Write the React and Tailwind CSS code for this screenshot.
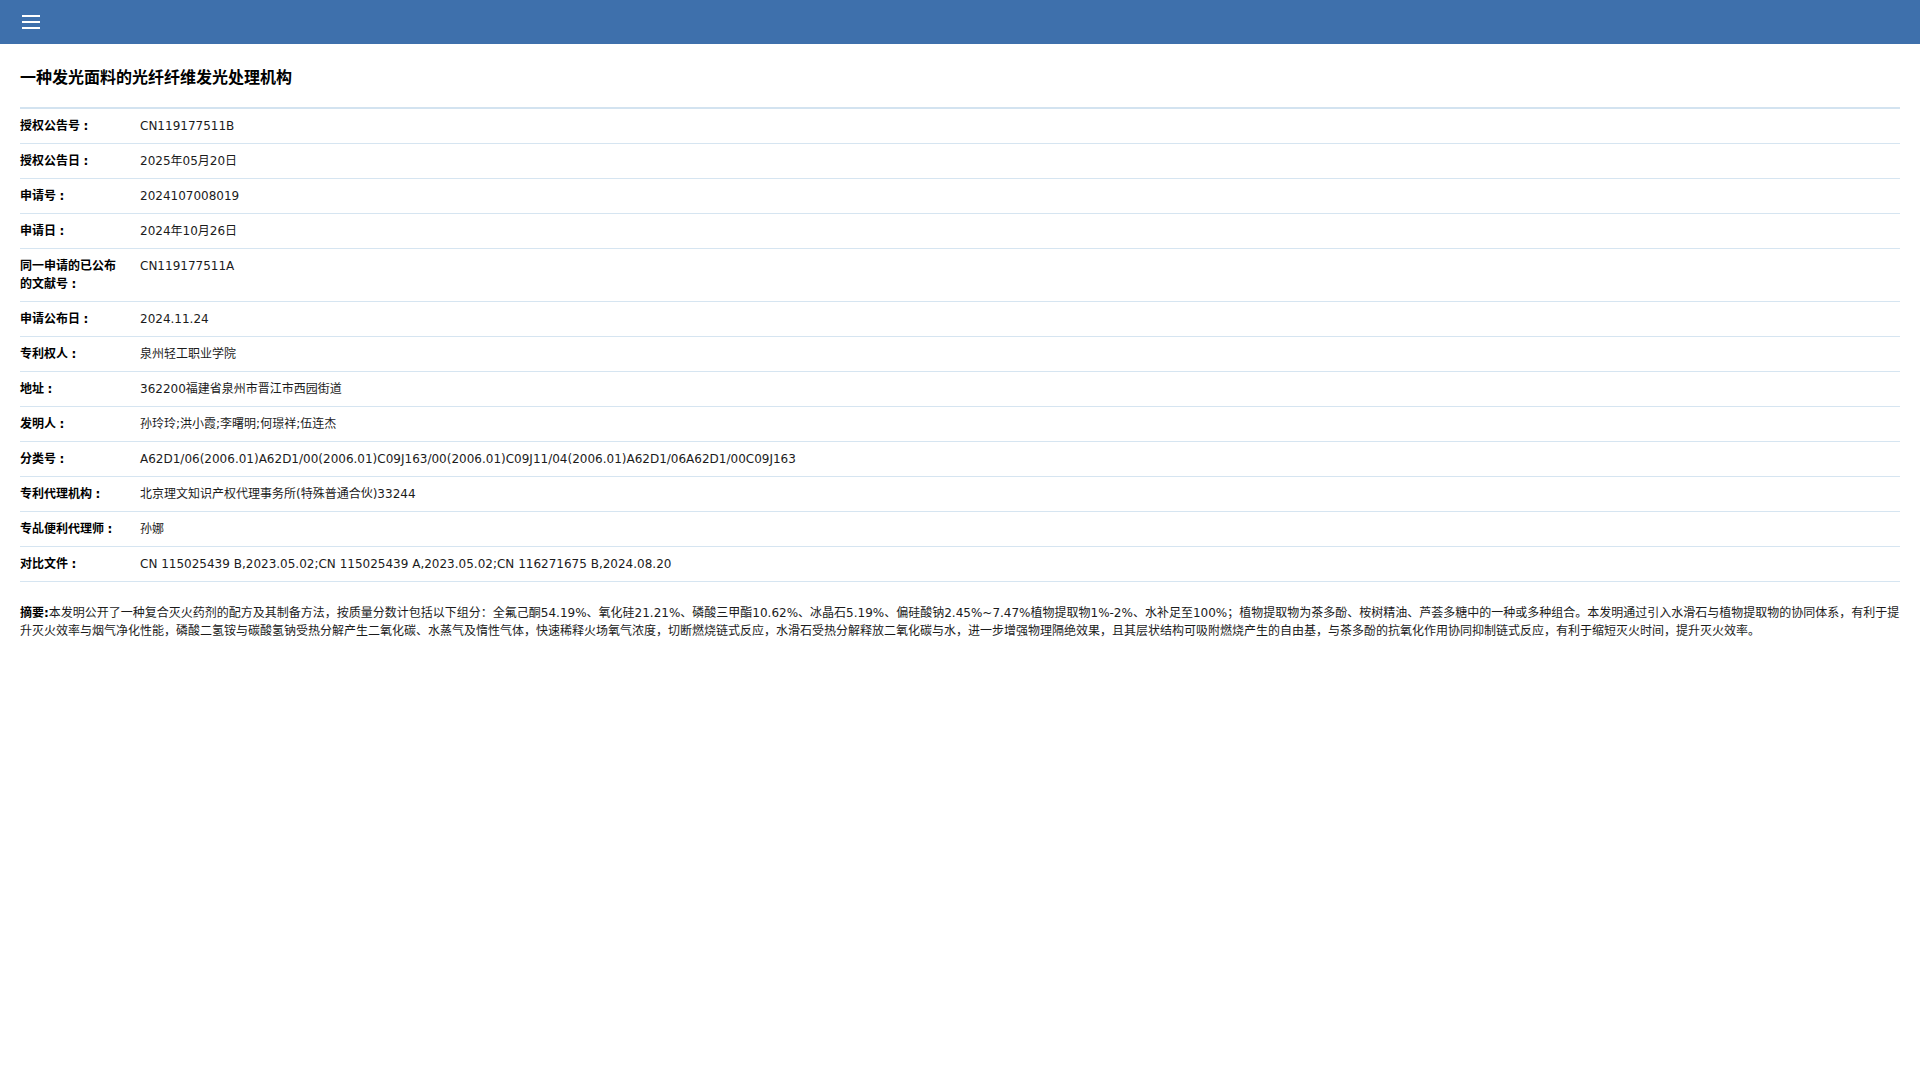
import React from 'react'

const rows = [
    ['授权公告号', 'CN119177511B'],
    ['授权公告日', '2025年05月20日'],
    ['申请号', '2024107008019'],
    ['申请日', '2024年10月26日'],
    ['同一申请的已公布的文献号', 'CN119177511A'],
    ['申请公布日', '2024.11.24'],
    ['专利权人', '泉州轻工职业学院'],
    ['地址', '362200福建省泉州市晋江市西园街道'],
    ['发明人', '孙玲玲;洪小霞;李曙明;何璟祥;伍连杰'],
    ['分类号', 'A62D1/06(2006.01)A62D1/00(2006.01)C09J163/00(2006.01)C09J11/04(2006.01)A62D1/06A62D1/00C09J163'],
    ['专利代理机构', '北京理文知识产权代理事务所(特殊普通合伙)33244'],
    ['专乩便利代理师', '孙娜'],
    ['对比文件', 'CN 115025439 B,2023.05.02;CN 115025439 A,2023.05.02;CN 116271675 B,2024.08.20'],
]

const abstract = '本发明公开了一种复合灭火药剂的配方及其制备方法，按质量分数计包括以下组分：全氟己酮54.19%、氧化硅21.21%、磷酸三甲酯10.62%、冰晶石5.19%、偏硅酸钠2.45%~7.47%植物提取物1%-2%、水补足至100%；植物提取物为茶多酚、桉树精油、芦荟多糖中的一种或多种组合。本发明通过引入水滑石与植物提取物的协同体系，有利于提升灭火效率与烟气净化性能，磷酸二氢铵与碳酸氢钠受热分解产生二氧化碳、水蒸气及惰性气体，快速稀释火场氧气浓度，切断燃烧链式反应，水滑石受热分解释放二氧化碳与水，进一步增强物理隔绝效果，且其层状结构可吸附燃烧产生的自由基，与茶多酚的抗氧化作用协同抑制链式反应，有利于缩短灭火时间，提升灭火效率。'

const App = () => {
    return (
        <div className="min-h-screen bg-white text-[#1b1b1b] font-['DejaVu_Sans','Noto_Sans_CJK_SC',sans-serif]">
            {/* top bar */}
            <div className="h-[44px] bg-[#3e70ac] flex items-center pl-[22px]">
                <button className="flex flex-col gap-[4px] w-[18px]">
                    <span className="block h-[2px] w-[18px] bg-white"></span>
                    <span className="block h-[2px] w-[18px] bg-white"></span>
                    <span className="block h-[2px] w-[18px] bg-white"></span>
                </button>
            </div>

            <div className="px-[20px]">
                <h1 className="mt-[22px] mb-[17px] text-[16px] leading-[24px] font-bold text-black">
                    一种发光面料的光纤纤维发光处理机构
                </h1>

                <div className="border-t-2 border-[#d3e3f0]">
                    {rows.map(([label, value]) => (
                        <div key={label} className="flex border-b border-[#d6e5f1] py-[8px] text-[12px] leading-[18px]">
                            <div className="w-[120px] shrink-0 pr-[16px] font-bold text-black">
                                {label}<span className="inline-block w-[12px] text-center">:</span>
                            </div>
                            <div className="flex-1">{value}</div>
                        </div>
                    ))}
                </div>

                <p className="mt-[22px] text-[12px] leading-[18px]">
                    <span className="font-bold text-black">摘要:</span>{abstract}
                </p>
            </div>
        </div>
    )
}

export default App
